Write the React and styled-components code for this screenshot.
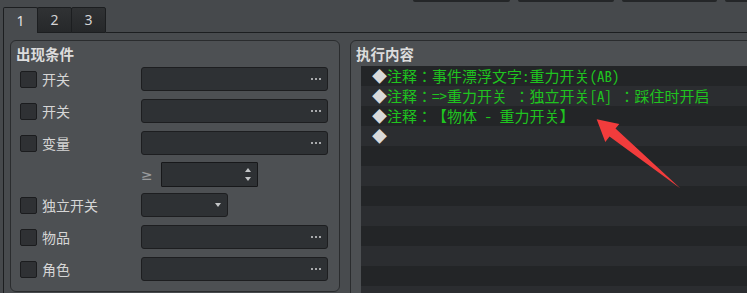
import React from "react";
import styled, { createGlobalStyle } from "styled-components";

const GlobalStyle = createGlobalStyle`
  html, body {
    margin: 0;
    padding: 0;
    background: #46494c;
  }
  body {
    font-family: "Noto Sans CJK SC", "Noto Sans", sans-serif;
  }
`;

const Screen = styled.div`
  position: relative;
  width: 747px;
  height: 293px;
  overflow: hidden;
  background: #46494c;
  display: flex;
  flex-direction: column;
`;

const StubBar = styled.div`
  height: 7px;
  display: flex;
  gap: 8px;
  padding-left: 413px;
  align-items: flex-start;
`;

const Stub = styled.div`
  flex: none;
  width: ${(p) => p.$w}px;
  height: 2px;
  background: #242628;
  border-radius: 0 0 2px 2px;
`;

const TabBar = styled.div`
  height: 26px;
  display: flex;
  padding-left: 3px;
`;

const Tab = styled.div`
  width: 35px;
  box-sizing: border-box;
  margin-left: ${(p) => (p.$first ? 0 : -1)}px;
  border: 1px solid #1c1e20;
  border-bottom: ${(p) => (p.$active ? "none" : "1px solid #1c1e20")};
  border-radius: 2px 2px 0 0;
  background: ${(p) =>
    p.$active ? "#484b4e" : "linear-gradient(#303234, #26282a)"};
  color: ${(p) => (p.$active ? "#e2e2e2" : "#d4d4d4")};
  font: 14px "Noto Sans", "DejaVu Sans", sans-serif;
  display: flex;
  align-items: center;
  justify-content: center;
  padding-bottom: 1px;
`;

const TabFill = styled.div`
  flex: 1;
  border-bottom: 1px solid #1c1e20;
`;

const Frame = styled.div`
  flex: 1;
  margin-left: 3px;
  border-left: 1px solid #1c1e20;
  background: #484b4e;
  display: flex;
  gap: 10px;
  padding: 7px 0 0 6px;
  overflow: hidden;
`;

const GroupBox = styled.div`
  flex: none;
  box-sizing: border-box;
  width: ${(p) => p.$w}px;
  height: ${(p) => p.$h}px;
  border: 1px solid #2a2c2e;
  border-radius: 6px;
  background: #4d5053;
  display: flex;
  flex-direction: column;
`;

const Title = styled.div`
  height: ${(p) => p.$h}px;
  line-height: ${(p) => p.$h}px;
  padding-left: 5px;
  font-size: 14.5px;
  font-weight: bold;
  color: #dcdcdc;
`;

const Rows = styled.div`
  display: flex;
  flex-direction: column;
  padding: 0 11px 0 9px;
`;

const Row = styled.div`
  display: flex;
  align-items: center;
  height: ${(p) => p.$h || 24}px;
  margin-top: ${(p) => p.$mt || 0}px;
`;

const CheckCell = styled.div`
  width: 121px;
  flex: none;
  display: flex;
  align-items: center;
  gap: 5px;
`;

const Check = styled.div`
  width: 17px;
  height: 17px;
  box-sizing: border-box;
  border: 1px solid #1b1c1e;
  border-radius: 2px;
  background: #2f3134;
`;

const Label = styled.span`
  font-size: 14px;
  color: #d6d6d6;
`;

const Field = styled.div`
  width: ${(p) => p.$w}px;
  height: 100%;
  box-sizing: border-box;
  border: 1px solid #1d1e20;
  border-radius: 3px;
  background: #2e3134;
  display: flex;
  align-items: center;
  justify-content: flex-end;
  padding-right: 6px;
`;

const Dots = styled.span`
  display: flex;
  gap: 2px;
  & > i {
    width: 2px;
    height: 2px;
    background: #a8aaac;
  }
`;

const Ge = styled.span`
  width: 20px;
  font: 14px "DejaVu Sans", sans-serif;
  color: #9a9c9e;
`;

const SpinBox = styled.div`
  width: 97px;
  height: 100%;
  box-sizing: border-box;
  border: 1px solid #17181a;
  border-radius: 1px;
  background: #2e3134;
  display: flex;
  justify-content: flex-end;
  padding-right: 6px;
`;

const SpinArrows = styled.div`
  display: flex;
  flex-direction: column;
  justify-content: center;
  gap: 5px;
`;

const Tri = styled.div`
  width: 0;
  height: 0;
  border-left: 3.5px solid transparent;
  border-right: 3.5px solid transparent;
  ${(p) =>
    p.$up
      ? "border-bottom: 4px solid #c4c6c8;"
      : "border-top: 4px solid #c4c6c8;"}
`;

const List = styled.div`
  flex: 1;
  margin-left: 10px;
  background: #232527;
  font-family: "Noto Sans Mono CJK JP", "Noto Sans CJK JP", monospace;
  font-size: 15px;
  text-spacing-trim: space-all;
`;

const Line = styled.div`
  height: 20px;
  line-height: 20px;
  padding-left: 11px;
  white-space: pre;
  color: #1fc41f;
  background: ${(p) => (p.$odd ? "#2b2d30" : "transparent")};
`;

const Diamond = styled.span`
  color: #dadada;
`;

const Arrow = styled.svg`
  position: absolute;
  left: 0;
  top: 0;
  pointer-events: none;
`;

const fields = [
  { label: "开关", mt: 0 },
  { label: "开关", mt: 8 },
  { label: "变量", mt: 8 },
];

const lines = [
  "注释：事件漂浮文字:重力开关(AB)",
  "注释：=>重力开关 ：独立开关[A] ：踩住时开启",
  "注释：【物体 - 重力开关】",
  "",
];

const DotsIcon = () => (
  <Dots>
    <i />
    <i />
    <i />
  </Dots>
);

const App = () => {
  const rows = [];
  for (let i = 0; i < 12; i++) rows.push(lines[i]);

  return (
    <Screen>
      <GlobalStyle />
      <StubBar>
        <Stub $w={97} />
        <Stub $w={96} />
        <Stub $w={95} />
        <Stub $w={30} />
      </StubBar>
      <TabBar>
        <Tab $first $active>
          1
        </Tab>
        <Tab>2</Tab>
        <Tab>3</Tab>
        <TabFill />
      </TabBar>
      <Frame lang="zh-CN">
        <GroupBox $w={330} $h={252}>
          <Title $h={26}>出现条件</Title>
          <Rows>
            {fields.map((f, i) => (
              <Row key={i} $mt={f.mt}>
                <CheckCell>
                  <Check />
                  <Label>{f.label}</Label>
                </CheckCell>
                <Field $w={187}>
                  <DotsIcon />
                </Field>
              </Row>
            ))}
            <Row $mt={7} $h={25}>
              <CheckCell />
              <Ge>≥</Ge>
              <SpinBox>
                <SpinArrows>
                  <Tri $up />
                  <Tri />
                </SpinArrows>
              </SpinBox>
            </Row>
            <Row $mt={6}>
              <CheckCell>
                <Check />
                <Label>独立开关</Label>
              </CheckCell>
              <Field $w={87}>
                <Tri />
              </Field>
            </Row>
            <Row $mt={8}>
              <CheckCell>
                <Check />
                <Label>物品</Label>
              </CheckCell>
              <Field $w={187}>
                <DotsIcon />
              </Field>
            </Row>
            <Row $mt={8}>
              <CheckCell>
                <Check />
                <Label>角色</Label>
              </CheckCell>
              <Field $w={187}>
                <DotsIcon />
              </Field>
            </Row>
          </Rows>
        </GroupBox>
        <GroupBox $w={420} $h={290}>
          <Title $h={25}>执行内容</Title>
          <List lang="ja">
            {rows.map((t, i) => (
              <Line key={i} $odd={i % 2 === 1}>
                {t !== undefined && <Diamond>◆</Diamond>}
                {t}
              </Line>
            ))}
          </List>
        </GroupBox>
      </Frame>
      <Arrow width="747" height="293" viewBox="0 0 747 293">
        <polygon
          points="596.7,119.3 619.3,124 615.5,128.5 680.5,188.5 609.5,136.5 605.3,142"
          fill="#f23c3c"
        />
      </Arrow>
    </Screen>
  );
};

export default App;
